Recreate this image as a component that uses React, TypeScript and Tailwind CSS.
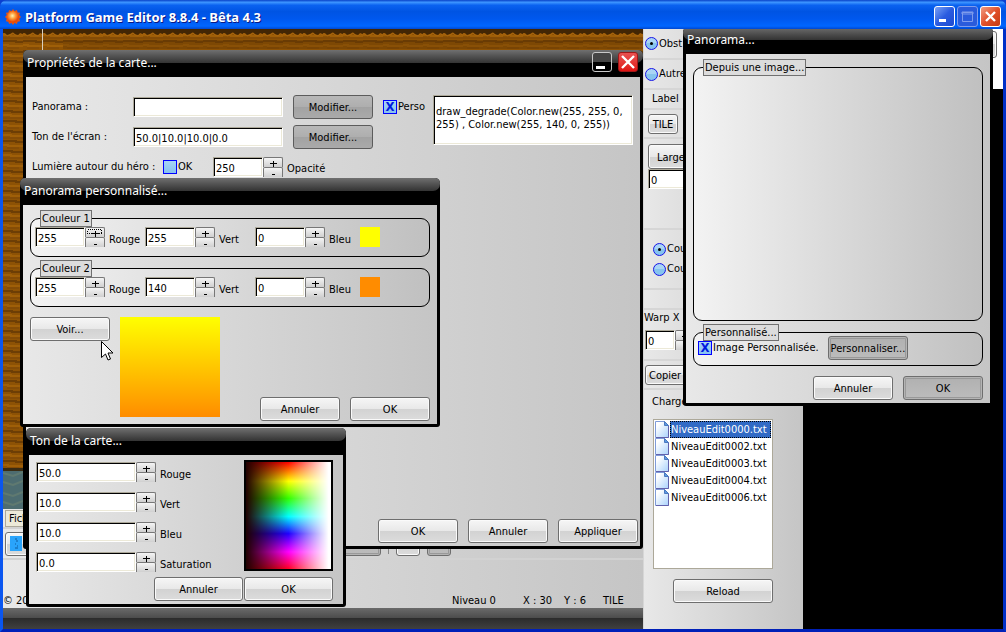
import type { ReactNode } from "react";
import clsx from "clsx";

const files = [
  "NiveauEdit0000.txt",
  "NiveauEdit0002.txt",
  "NiveauEdit0003.txt",
  "NiveauEdit0004.txt",
  "NiveauEdit0006.txt",
];

const tones = [
  { label: "Rouge", value: "50.0" },
  { label: "Vert", value: "10.0" },
  { label: "Bleu", value: "10.0" },
  { label: "Saturation", value: "0.0" },
];

const colors = [
  { title: "Couleur 1", rgb: ["255", "255", "0"], swatch: "bg-[#ffff00]" },
  { title: "Couleur 2", rgb: ["255", "140", "0"], swatch: "bg-[#ff8c00]" },
];

const panelBg = "bg-linear-to-r from-[#e8e8e8] to-[#c5c5c5]";
const fieldCls =
  "min-w-0 border border-t-[#aca899] border-l-[#aca899] border-r-white border-b-white bg-white px-[2px] shadow-[inset_1px_1px_0_#000,inset_-1px_-1px_0_#ece9d8] outline-none";

function Btn({ children, className, pressed }: { children?: ReactNode; className?: string; pressed?: boolean }) {
  return (
    <button
      type="button"
      className={clsx(
        "shrink-0 whitespace-nowrap rounded-[3px] border border-[#6e6e6e] pt-[2px]",
        pressed
          ? "bg-linear-to-b from-[#b0b0b0] to-[#bcbcbc] shadow-[inset_0_0_0_1px_#b4b4b4,inset_0_0_0_2px_#999]"
          : "bg-[linear-gradient(#f6f6f6,#e8e8e8_50%,#d2d2d2_50%,#dcdcdc)] shadow-[inset_0_0_0_1px_#fafafa]",
        className ?? "h-6 w-20"
      )}
    >
      {children}
    </button>
  );
}

function DarkBtn({ children }: { children: ReactNode }) {
  return (
    <button
      type="button"
      className="h-6 w-20 shrink-0 rounded-[3px] border border-[#5c5c5c] bg-[linear-gradient(#b8b8b8,#aeaeae_50%,#a2a2a2_50%,#aaaaaa)] pt-[2px]"
    >
      {children}
    </button>
  );
}

function Field({ value, label, className }: { value: string; label: string; className?: string }) {
  return <input type="text" aria-label={label} defaultValue={value} className={clsx("h-5 pt-[2px]", fieldCls, className)} />;
}

function Spinner({ value, label, width = "w-[50px]", focused }: { value: string; label: string; width?: string; focused?: boolean }) {
  const half =
    "flex h-[10px] items-center justify-center overflow-hidden rounded-t-[2px] border border-b-0 border-[#777] bg-linear-to-b from-[#f5f5f5] to-[#d0d0d0]";
  return (
    <div className="flex h-5 shrink-0">
      <Field value={value} label={label} className={width} />
      <div className="flex w-5 flex-col">
        <button type="button" aria-label={label + " +"} className={half}>
          <svg width="16" height="9" viewBox="0 0 16 9" shapeRendering="crispEdges">
            {focused && <rect x="0.5" y="1.5" width="14" height="4" fill="none" stroke="#000" strokeDasharray="1 1" />}
            <path d="M5 5.5h7M8.500 3v6" stroke="#000" fill="none" />
          </svg>
        </button>
        <button type="button" aria-label={label + " -"} className={half}>
          <svg width="16" height="9" viewBox="0 0 16 9" shapeRendering="crispEdges">
            <path d="M7 6.5h3" stroke="#000" fill="none" />
          </svg>
        </button>
      </div>
    </div>
  );
}

function Check({ label, checked }: { label: string; checked?: boolean }) {
  return (
    <label className="flex shrink-0 items-center gap-px">
      <input
        type="checkbox"
        defaultChecked={checked}
        className="flex size-[14px] appearance-none items-center justify-center border border-[#0000ff] bg-linear-to-b from-[#a8d4f4] to-[#86c2f0] text-[13px] font-bold leading-3 text-[#0018e0] checked:before:content-['X']"
      />
      {label}
    </label>
  );
}

function Radio({ label, name, checked }: { label: string; name: string; checked?: boolean }) {
  return (
    <label className="flex items-center gap-px whitespace-nowrap">
      <input
        type="radio"
        name={name}
        defaultChecked={checked}
        className="flex size-[13px] shrink-0 appearance-none items-center justify-center rounded-full border border-[#1414e8] bg-[linear-gradient(#a9d5f5_50%,#86c4ee_50%)] checked:before:size-[3px] checked:before:rounded-full checked:before:bg-black checked:before:content-['']"
      />
      {label}
    </label>
  );
}

function Group({ title, className, children }: { title: string; className?: string; children?: ReactNode }) {
  return (
    <fieldset className={clsx("min-w-0 rounded-[9px] border border-black bg-linear-to-r from-[#f3f3f3] to-[#c0c0c0] pl-1", className)}>
      <legend className="ml-[5px] h-[17px] border border-[#707070] bg-[#dcdcdc] px-px leading-[15px]">{title}</legend>
      {children}
    </fieldset>
  );
}

function Dialog({ title, className, controls, children }: { title: string; className: string; controls?: ReactNode; children: ReactNode }) {
  return (
    <section
      aria-label={title}
      className={clsx("absolute flex flex-col overflow-hidden rounded-t-[5px] rounded-b-[3px] bg-black px-[3px] pb-[3px]", className)}
    >
      <header className="relative -mx-[3px] h-[27px] shrink-0">
        <div className="h-[13px] rounded-b-[7px] bg-linear-to-b from-[#707070] to-[#333]" />
        <h2 className="absolute inset-x-1 top-1 font-['Noto_Sans'] text-xs leading-[18px] text-white">{title}</h2>
        {controls}
      </header>
      <div className={clsx("flex min-h-0 flex-1 flex-col", panelBg)}>{children}</div>
    </section>
  );
}

function AppIcon() {
  return (
    <svg width="16" height="16" viewBox="0 0 16 16">
      <defs>
        <radialGradient id="sun" cx="45%" cy="40%">
          <stop offset="0" stopColor="#fff4b0" />
          <stop offset="0.5" stopColor="#ff9d3a" />
          <stop offset="1" stopColor="#e84a08" />
        </radialGradient>
      </defs>
      <path
        d="M8 0l1.5 2L12 .9l.6 2.5 2.5.3-.9 2.4L16 8l-1.8 1.8.9 2.5-2.5.4-.6 2.4-2.5-1L8 16l-1.5-1.9-2.5 1-.6-2.4-2.5-.4.9-2.5L0 8l1.8-1.900-.9-2.400 2.500-.3L4 .9 6.500 2z"
        fill="#e8540e"
      />
      <circle cx="8" cy="8" r="6" fill="url(#sun)" />
    </svg>
  );
}

function Ground() {
  return (
    <svg className="absolute inset-0 size-full" aria-hidden="true">
      <defs>
        <pattern id="dirt" width="20" height="20" patternUnits="userSpaceOnUse">
          <rect width="20" height="20" fill="#8d5205" />
          <path d="M0 2h9v1h11M0 12h13v1h7" stroke="#6d3e05" strokeWidth="2" fill="none" />
          <path d="M0 6h8v1h12M0 16h5v1h15" stroke="#9f5f08" strokeWidth="2" fill="none" />
          <path d="M0 9h20M4 19h12" stroke="#7c4606" fill="none" />
        </pattern>
        <pattern id="edge" width="20" height="8" patternUnits="userSpaceOnUse">
          <path d="M0 0h20v5l-3-1-2 2-3-1-2-2-3 2-3 1-2-2H0z" fill="#422604" />
          <path d="M0 5h2l2 2 3-1 3-2 2 2 3 1 2-2 3 1" stroke="#a8640c" fill="none" />
        </pattern>
        <pattern id="water" width="20" height="20" patternUnits="userSpaceOnUse">
          <rect width="20" height="20" fill="#4d6c70" />
          <path d="M0 4l10 3 10-4M0 13l10 3 10-4" stroke="#5f7970" strokeWidth="2" fill="none" />
        </pattern>
      </defs>
      <rect width="100%" height="100%" fill="url(#dirt)" />
      <rect width="100%" height="8" fill="url(#edge)" />
      <rect x="60" y="11" width="100%" height="9" fill="#603604" opacity="0.35" />
      <rect x="39" width="1" height="21" fill="#d8d0c0" />
      <rect y="440" width="100%" height="40" fill="url(#water)" />
      <rect y="439" width="100%" height="3" fill="#3a2c14" />
    </svg>
  );
}

function FileIcon() {
  return (
    <svg width="15" height="17" viewBox="0 0 15 17" className="shrink-0">
      <defs>
        <linearGradient id="page" x1="0" y1="0" x2="1" y2="1">
          <stop offset="0.2" stopColor="#fff" />
          <stop offset="1" stopColor="#a9d2fc" />
        </linearGradient>
      </defs>
      <path d="M.5.5h9l4 4v12H.5z" fill="url(#page)" stroke="#7f9bd8" />
      <path d="M9.500.5v4h4z" fill="#5c9be0" stroke="#4a78c0" />
      <path d="M13.500 5v11.500H1" stroke="#6262ac" fill="none" />
    </svg>
  );
}

function TitleBar() {
  return (
    <header className="relative z-10 flex h-[29px] shrink-0 items-center gap-1 rounded-t-[7px] bg-[linear-gradient(#0842c8_0%,#3d95ff_8%,#0a62f0_18%,#0054e3_40%,#0058ee_65%,#0066ff_90%,#0047d0_100%)] pt-1 pl-[5px] pr-[5px]">
      <AppIcon />
      <h1 className="flex-1 font-['Noto_Sans'] text-[13px] leading-4 font-bold text-white [text-shadow:1px_1px_0_#0a1883]">
        Platform Game Editor 8.8.4 - Bêta 4.3
      </h1>
      <div className="flex gap-[2px]">
        <button type="button" aria-label="Réduire" className="size-[21px] rounded-[3px] border border-white bg-linear-to-br from-[#7ba0f4] via-[#2a5be0] to-[#1d49d0]">
          <svg width="19" height="19" viewBox="0 0 19 19">
            <path d="M4 12h7v3H4z" fill="#fff" />
          </svg>
        </button>
        <button type="button" aria-label="Agrandir" disabled className="size-[21px] rounded-[3px] border border-[#7f9cec] bg-[#2a5bdc]">
          <svg width="19" height="19" viewBox="0 0 19 19" fill="none" stroke="#7f9cec">
            <path d="M4.500 5.500h10v9h-10zM4 5h11v2H4z" />
          </svg>
        </button>
        <button type="button" aria-label="Fermer" className="size-[21px] rounded-[3px] border border-white bg-linear-to-br from-[#f09a80] via-[#e0502a] to-[#c63a10]">
          <svg width="19" height="19" viewBox="0 0 19 19">
            <path d="M5 5l9 9M14 5l-9 9" stroke="#fff" strokeWidth="2.400" />
          </svg>
        </button>
      </div>
    </header>
  );
}

function Toolbar() {
  return (
    <div className={clsx("flex h-[120px] shrink-0 flex-col", panelBg)}>
      <div className="h-5 border-b-2 border-[#d2d2d2] pt-px pl-[2px]">
        <button type="button" className="h-[17px] w-[50px] border border-[#aca899] bg-[#ece9d8] px-[3px] text-left leading-[15px]">
          Fichier
        </button>
      </div>
      <div className="flex h-[31px] items-center gap-[7px] border-b-2 border-[#d2d2d2] pl-[2px]">
        <Btn className="flex h-6 w-[60px] items-center pb-[2px] pl-1">
          <svg width="12" height="15" viewBox="0 0 12 15" aria-label="Carte">
            <path d="M0 0h12v15H0z" fill="#2aa4fb" />
            <path d="M5 3h2M6 5h2M5 8h1M7 10h1M5 12h3" stroke="#0d5a9e" />
          </svg>
        </Btn>
        <Btn pressed className="ml-[229px] h-6 w-[80px]" />
        <span className="h-5 w-px bg-[#888]" />
        <Btn className="h-6 w-6" />
        <Btn pressed className="h-6 w-6" />
      </div>
      <div className="flex flex-1 items-end">
        <span className="flex-1 whitespace-nowrap">© 2008</span>
        <span className="w-[71px]">Niveau 0</span>
        <span className="w-[41px]">X : 30</span>
        <span className="w-[39px]">Y : 6</span>
        <span className="w-10">TILE</span>
      </div>
      <div className="h-[21px] bg-[linear-gradient(#6a6a6a,#4a4a4a_50%,#2c2c2c_50%,#404040)]" />
    </div>
  );
}

function SidePanel() {
  const line = "border-b-2 border-[#d6d6d6]";
  return (
    <aside className={clsx("flex w-40 shrink-0 flex-col border-l border-[#d6d6d6]", panelBg)}>
      <div className={clsx("flex h-[31px] items-center pl-px", line)}>
        <Radio name="kind" label="Obst" checked />
      </div>
      <div className={clsx("flex h-[30px] items-center pl-px", line)}>
        <Radio name="kind" label="Autre" />
      </div>
      <div className={clsx("flex h-5 items-center pl-2", line)}>Label</div>
      <div className={clsx("flex h-[29px] items-center pl-1", line)}>
        <Btn className="h-5 w-[30px]">TILE</Btn>
      </div>
      <div className={clsx("flex h-[91px] flex-col pt-[5px] pl-1", line)}>
        <Btn className="h-[25px] w-[60px] pl-2 text-left">Largeur</Btn>
        <Field label="Largeur" value="0" className="w-[60px]" />
      </div>
      <div className={clsx("flex h-[60px] flex-col justify-center gap-[6px] pl-[9px]", line)}>
        <Radio name="layer" label="Couche 1" checked />
        <Radio name="layer" label="Couche 2" />
      </div>
      <div className={clsx("h-5", line)} />
      <div className={clsx("flex h-[51px] flex-col", line)}>
        <span className="mb-1 leading-4">Warp X</span>
        <div className="pl-px">
          <Spinner label="Warp X" value="0" width="w-[30px]" />
        </div>
      </div>
      <div className={clsx("flex h-[29px] items-center pl-px", line)}>
        <Btn className="h-5 w-[50px] pl-[3px] text-left">Copier</Btn>
      </div>
      <div className="pt-1 pl-2 leading-4">Charger</div>
      <ul className="ml-[9px] mt-[9px] h-[150px] w-[120px] border border-[#aca899] bg-white p-px">
        {files.map((f, i) => (
          <li key={f} className="h-[17px]">
            <button type="button" className="flex w-full items-center">
              <FileIcon />
              <span
                className={clsx(
                  "h-[17px] flex-1 px-px text-left leading-[18px]",
                  i === 0 && "bg-[#316ac5] text-white outline-1 -outline-offset-1 outline-dotted outline-black"
                )}
              >
                {f}
              </span>
            </button>
          </li>
        ))}
      </ul>
      <Btn className="ml-[29px] mt-[10px] h-6 w-[100px]">Reload</Btn>
    </aside>
  );
}

function MapProperties() {
  return (
    <Dialog
      title="Propriétés de la carte..."
      className="left-[23px] top-[50px] h-[499px] w-[620px]"
      controls={
        <div className="absolute right-[5px] top-[2px] flex gap-[6px]">
          <button type="button" aria-label="Réduire" className="size-5 rounded-[3px] border border-[#c8c8c8] bg-[linear-gradient(#454545_50%,#000_50%)]">
            <svg width="18" height="18" viewBox="0 0 18 18">
              <path d="M3 13h9v3H3z" fill="#fff" />
            </svg>
          </button>
          <button type="button" aria-label="Fermer" className="size-5 rounded-[3px] border border-[#a01818] bg-linear-to-b from-[#e85050] to-[#e01010]">
            <svg width="18" height="18" viewBox="0 0 18 18">
              <path d="M3 3l12 12M15 3L3 15" stroke="#fff" strokeWidth="2.400" />
            </svg>
          </button>
        </div>
      }
    >
      <div className="flex items-start justify-between pt-[18px] pr-[7px] pl-[6px]">
        <div className="flex flex-col gap-[6px]">
          <div className="flex h-6 items-center">
            <label htmlFor="pano" className="w-[101px]">Panorama :</label>
            <input id="pano" className={clsx("mr-[10px] h-5 w-[150px] pt-[2px]", fieldCls)} />
            <DarkBtn>Modifier...</DarkBtn>
            <div className="ml-[10px]">
              <Check label="Perso" checked />
            </div>
          </div>
          <div className="flex h-6 items-center">
            <label htmlFor="tone" className="w-[101px]">Ton de l'écran :</label>
            <input id="tone" defaultValue="50.0|10.0|10.0|0.0" className={clsx("mr-[10px] h-5 w-[150px] pt-[2px]", fieldCls)} />
            <DarkBtn>Modifier...</DarkBtn>
          </div>
          <div className="flex h-6 items-center">
            <span className="w-[131px]">Lumière autour du héro :</span>
            <div className="w-[50px]">
              <Check label="OK" />
            </div>
            <Spinner label="Opacité" value="250" />
            <span className="pt-1 pl-1">Opacité</span>
          </div>
        </div>
        <textarea
          aria-label="Script du panorama"
          defaultValue="draw_degrade(Color.new(255, 255, 0, 255) , Color.new(255, 140, 0, 255))"
          className={clsx("h-[50px] w-[200px] resize-none overflow-hidden pt-[9px] leading-[13px]", fieldCls)}
        />
      </div>
      <div className="mt-auto flex justify-end gap-[10px] pr-[2px] pb-[3px]">
        <Btn>OK</Btn>
        <Btn>Annuler</Btn>
        <Btn>Appliquer</Btn>
      </div>
    </Dialog>
  );
}

function CustomPanorama() {
  return (
    <Dialog title="Panorama personnalisé..." className="left-[20px] top-[178px] h-[249px] w-[420px]">
      <div className="flex flex-1 flex-col px-[7px] pt-[5px]">
        {colors.map(({ title, rgb, swatch }, i) => (
          <Group key={title} title={title} className="mb-[3px] pb-[9px]">
            <div className="flex items-center">
              {["Rouge", "Vert", "Bleu"].map((name, j) => (
                <div key={name} className={clsx("flex items-end gap-1", j === 2 ? "w-[105px]" : "w-[110px]")}>
                  <Spinner label={title + " " + name} value={rgb[j]} focused={i === 0 && j === 0} />
                  <span>{name}</span>
                </div>
              ))}
              <span className={clsx("size-5", swatch)} />
            </div>
          </Group>
        ))}
        <div className="mt-[7px] flex flex-1 gap-[10px]">
          <Btn>Voir...</Btn>
          <div className="size-[100px] bg-linear-to-b from-[#ffff00] to-[#ff8c00]" />
          <div className="ml-auto flex items-end gap-[10px] pb-[3px]">
            <Btn>Annuler</Btn>
            <Btn>OK</Btn>
          </div>
        </div>
      </div>
    </Dialog>
  );
}

function MapTone() {
  return (
    <Dialog title="Ton de la carte..." className="left-[26px] top-[428px] h-[179px] w-[320px]">
      <div className="flex justify-between pt-[5px] pr-[10px] pl-[7px]">
        <div className="flex flex-col gap-[10px] pt-[2px]">
          {tones.map(({ label, value }) => (
            <div key={label} className="flex items-end gap-1">
              <Spinner label={label} value={value} width="w-[100px]" />
              <span>{label}</span>
            </div>
          ))}
        </div>
        <div className="h-[111px] w-[89px] border-2 border-black bg-[linear-gradient(to_right,#200000,transparent_50%,#fff_97%),linear-gradient(#f00,#ff0_18%,#3f0_34%,#0ff_51%,#20f_67%,#f0f_84%,#f02)]" />
      </div>
      <div className="mt-auto flex justify-end gap-px pr-[10px] pb-[3px]">
        <Btn className="h-6 w-[89px]">Annuler</Btn>
        <Btn className="h-6 w-[89px]">OK</Btn>
      </div>
    </Dialog>
  );
}

function PanoramaDialog() {
  return (
    <Dialog title="Panorama..." className="left-[683px] top-[27px] h-[379px] w-[310px]">
      <div className="flex flex-1 flex-col px-[7px] pt-[5px]">
        <Group title="Depuis une image..." className="h-[262px]" />
        <Group title="Personnalisé..." className="mt-[3px] h-[42px]">
          <div className="flex items-start">
            <div className="w-[130px]">
              <Check label="Image Personnalisée." checked />
            </div>
            <Btn pressed className="-mt-[5px] flex h-6 w-20 items-center justify-center">Personnaliser...</Btn>
          </div>
        </Group>
        <div className="mt-auto flex justify-end gap-[10px] pb-[3px]">
          <Btn>Annuler</Btn>
          <Btn pressed>OK</Btn>
        </div>
      </div>
    </Dialog>
  );
}

export default function App() {
  return (
    <div className="relative flex min-h-screen flex-col overflow-hidden bg-[#0a3fd0] font-['DejaVu_Sans_Condensed','Noto_Sans',sans-serif] text-[11px] leading-[14px] text-black">
      <TitleBar />
      <main className="flex flex-1 border-x-[3px] border-b-[3px] border-l-[#0a56f0] border-r-[#0030c8] border-b-[#0020b8] bg-black">
        <div className="flex min-w-0 flex-1 flex-col">
          <div className="relative flex-1 overflow-hidden">
            <Ground />
          </div>
          <Toolbar />
        </div>
        <SidePanel />
        <div className="w-[200px] shrink-0">
          <div className="flex h-[60px] justify-end bg-white pt-[2px] pr-[6px]">
            <Btn className="h-[27px] w-10" />
          </div>
        </div>
      </main>
      <MapProperties />
      <CustomPanorama />
      <MapTone />
      <PanoramaDialog />
      <svg className="pointer-events-none absolute left-[101px] top-[341px]" width="12" height="21" viewBox="0 0 12 21">
        <path d="M.5.5v16l4-3.500 2.500 6 2.500-1-2.500-6h5z" fill="#fff" stroke="#000" />
      </svg>
    </div>
  );
}
